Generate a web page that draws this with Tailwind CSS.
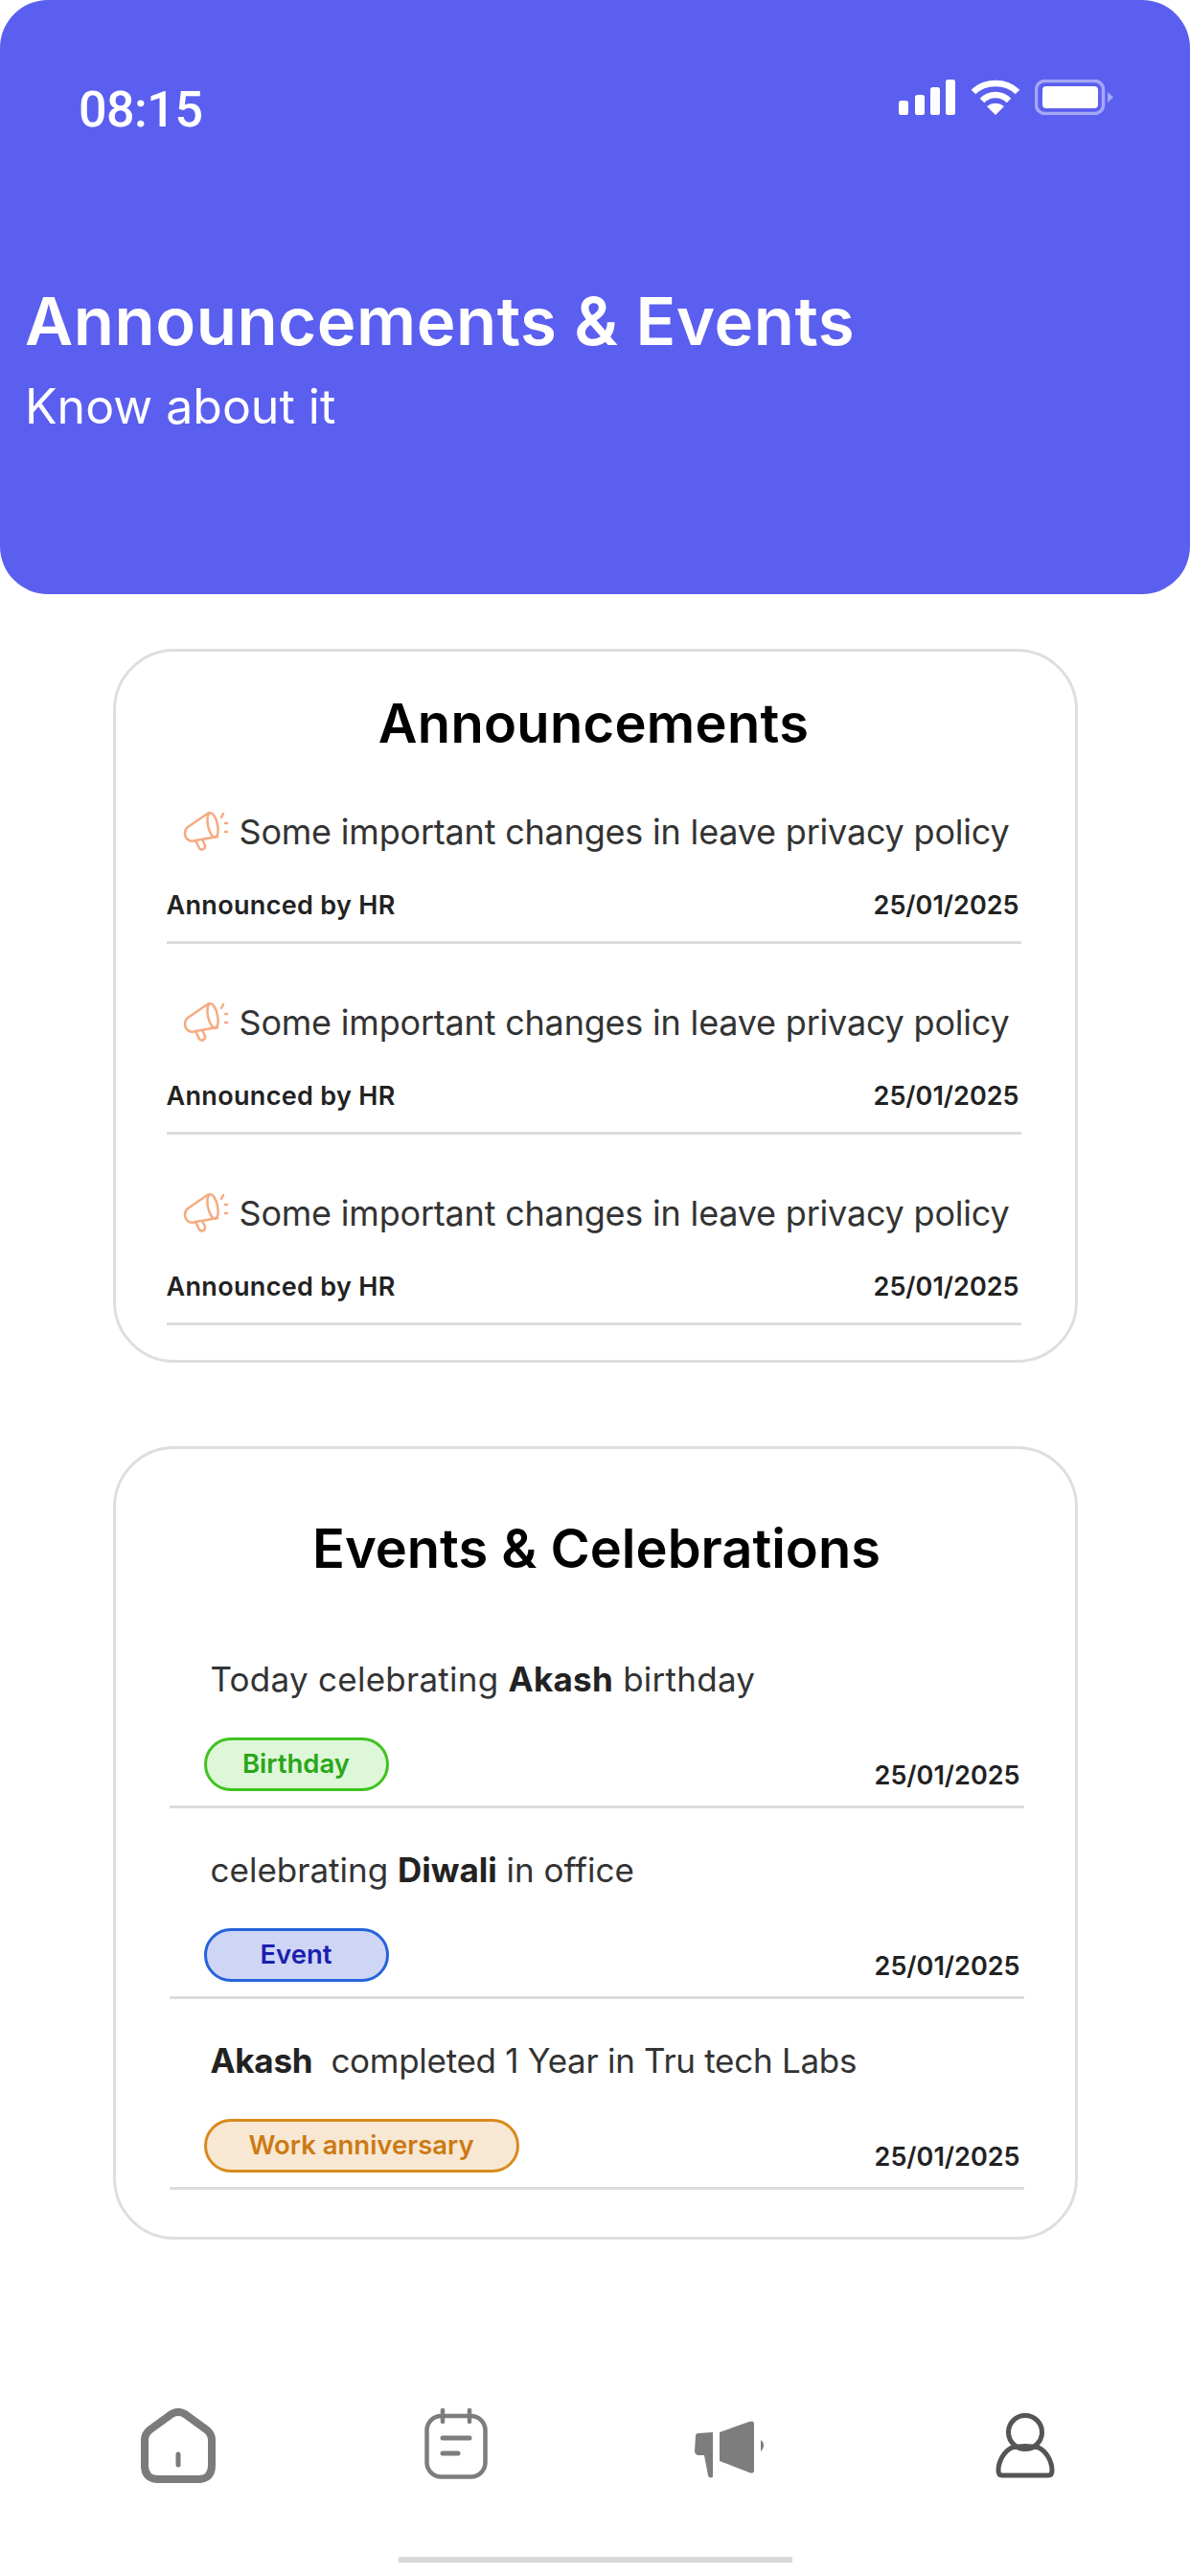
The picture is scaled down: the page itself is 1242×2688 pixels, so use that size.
<!DOCTYPE html>
<html lang="en">
  <head>
    <meta charset="UTF-8" />
    <meta name="viewport" content="width=device-width, initial-scale=1.0" />
    <script src="https://cdn.jsdelivr.net/npm/@tailwindcss/browser@4"></script>
    <title>Announcements & Events</title>
  </head>
  <body class="bg-white">
    <div class="w-[1242px] h-[2688px] overflow-hidden bg-white flex flex-col font-['Inter',sans-serif] text-[#2b2b2b]">
      <!-- Header -->
      <header class="h-[620px] shrink-0 bg-[#5b5fef] rounded-[50px] text-white">
        <div class="flex justify-between items-start pl-[82px] pr-[80px] pt-[83px]">
          <span class="text-[52px] leading-[64px] tracking-[-0.5px] font-medium font-['Roboto',sans-serif]">08:15</span>
          <div class="flex items-center gap-[15px] h-[37px]">
            <svg width="60" height="37" viewBox="0 0 60 37" fill="#fff">
              <rect x="0" y="22" width="10" height="15" rx="2.5" />
              <rect x="17" y="16" width="10" height="21" rx="2.5" />
              <rect x="33" y="8" width="10" height="29" rx="2.5" />
              <rect x="49" y="0" width="10" height="37" rx="2.5" />
            </svg>
            <svg width="52" height="37" viewBox="0 0 52 37" fill="none" stroke="#fff" stroke-width="6.5">
              <path d="M3 13 C15 1 37 1 49 13" />
              <path d="M12 22 C20 14 32 14 40 22" />
              <path d="M26 37 L17 28 C22 23.500 30 23.500 35 28 Z" fill="#fff" stroke="none" />
            </svg>
            <svg width="82" height="37" viewBox="0 0 82 37" fill="none">
              <rect x="1.500" y="1.500" width="70" height="34" rx="9" stroke="#fff" stroke-opacity="0.45" stroke-width="3.500" />
              <rect x="8" y="7" width="58" height="23" rx="4" fill="#fff" />
              <path d="M76 13 L82 18.500 L76 24 Z" fill="#fff" fill-opacity="0.45" />
            </svg>
          </div>
        </div>
        <div class="pl-[26px] mt-[148px]">
          <h1 class="text-[69px] leading-[80px] font-semibold whitespace-nowrap tracking-[0.5px]">Announcements &amp; Events</h1>
          <p class="text-[50px] leading-[60px] mt-[19px] whitespace-nowrap">Know about it</p>
        </div>
      </header>

      <main class="flex flex-col items-center">
        <!-- Announcements -->
        <section class="w-[1007px] h-[745px] mt-[57px] border-[3px] border-[#dedede] rounded-[64px] bg-white pl-[53px] pr-[56px]">
          <h2 class="text-[56px] leading-[62px] font-semibold text-black text-center mt-[44px] tracking-[0.3px]">Announcements</h2>

          <div class="h-[199px] pt-[54px] border-b-[3px] border-[#dcdcdc]">
            <div class="flex items-center pl-[17px] h-[56px]">
              <svg width="50" height="44" viewBox="0 0 50 44" fill="none" stroke="#f5ab82" stroke-width="2.500" stroke-linejoin="round" stroke-linecap="round" class="shrink-0">
                <path d="M27 2 L5 17 C1 20 1 27 5 30 C7 32 10 32 13 31 L36 27" />
                <ellipse cx="31" cy="15" rx="5" ry="13" transform="rotate(-12 31 15)" />
                <path d="M13 31 L17 39 C19 42 24 40 23 36 L20 30" />
                <path d="M42 3 L40 7 M46 13 L44 13 M46 22 L44 22" />
              </svg>
              <span class="ml-[9px] text-[36px] leading-[46px] text-[#333] whitespace-nowrap tracking-[-0.2px]">Some important changes in leave privacy policy</span>
            </div>
            <div class="flex justify-between items-center mt-[32px] leading-[34px] font-semibold text-[#222] pr-[2px]">
              <span class="text-[27px] tracking-[0.33px]">Announced by HR</span><span class="text-[27px]">25/01/2025</span>
            </div>
          </div>

          <div class="h-[199px] pt-[54px] border-b-[3px] border-[#dcdcdc]">
            <div class="flex items-center pl-[17px] h-[56px]">
              <svg width="50" height="44" viewBox="0 0 50 44" fill="none" stroke="#f5ab82" stroke-width="2.500" stroke-linejoin="round" stroke-linecap="round" class="shrink-0">
                <path d="M27 2 L5 17 C1 20 1 27 5 30 C7 32 10 32 13 31 L36 27" />
                <ellipse cx="31" cy="15" rx="5" ry="13" transform="rotate(-12 31 15)" />
                <path d="M13 31 L17 39 C19 42 24 40 23 36 L20 30" />
                <path d="M42 3 L40 7 M46 13 L44 13 M46 22 L44 22" />
              </svg>
              <span class="ml-[9px] text-[36px] leading-[46px] text-[#333] whitespace-nowrap tracking-[-0.2px]">Some important changes in leave privacy policy</span>
            </div>
            <div class="flex justify-between items-center mt-[32px] leading-[34px] font-semibold text-[#222] pr-[2px]">
              <span class="text-[27px] tracking-[0.33px]">Announced by HR</span><span class="text-[27px]">25/01/2025</span>
            </div>
          </div>

          <div class="h-[199px] pt-[54px] border-b-[3px] border-[#dcdcdc]">
            <div class="flex items-center pl-[17px] h-[56px]">
              <svg width="50" height="44" viewBox="0 0 50 44" fill="none" stroke="#f5ab82" stroke-width="2.500" stroke-linejoin="round" stroke-linecap="round" class="shrink-0">
                <path d="M27 2 L5 17 C1 20 1 27 5 30 C7 32 10 32 13 31 L36 27" />
                <ellipse cx="31" cy="15" rx="5" ry="13" transform="rotate(-12 31 15)" />
                <path d="M13 31 L17 39 C19 42 24 40 23 36 L20 30" />
                <path d="M42 3 L40 7 M46 13 L44 13 M46 22 L44 22" />
              </svg>
              <span class="ml-[9px] text-[36px] leading-[46px] text-[#333] whitespace-nowrap tracking-[-0.2px]">Some important changes in leave privacy policy</span>
            </div>
            <div class="flex justify-between items-center mt-[32px] leading-[34px] font-semibold text-[#222] pr-[2px]">
              <span class="text-[27px] tracking-[0.33px]">Announced by HR</span><span class="text-[27px]">25/01/2025</span>
            </div>
          </div>
        </section>

        <!-- Events -->
        <section class="w-[1007px] h-[828px] mt-[87px] border-[3px] border-[#dedede] rounded-[64px] bg-white pl-[56px] pr-[53px]">
          <h2 class="text-[56px] leading-[70px] font-semibold text-black text-center mt-[69px] mb-[37px]">Events &amp; Celebrations</h2>

          <div class="h-[199px] pt-[41px] border-b-[3px] border-[#dcdcdc]">
            <p class="pl-[43px] text-[35px] leading-[46px] text-[#333] whitespace-nowrap tracking-[0.26px]">Today celebrating <b class="font-bold text-[#222]">Akash</b> birthday</p>
            <div class="flex justify-between items-end mt-[38px] pl-[36px] pr-[4px]">
              <span class="h-[56px] w-[193px] flex items-center justify-center rounded-full border-[3px] border-[#3fc31f] bg-[#def7d8] text-[#2aa61a] text-[27.500px] font-semibold">Birthday</span>
              <span class="text-[27px] leading-[34px] font-semibold text-[#222] mb-[-1px]">25/01/2025</span>
            </div>
          </div>

          <div class="h-[199px] pt-[41px] border-b-[3px] border-[#dcdcdc]">
            <p class="pl-[43px] text-[35px] leading-[46px] text-[#333] whitespace-nowrap">celebrating <b class="font-bold text-[#222]">Diwali</b> in office</p>
            <div class="flex justify-between items-end mt-[38px] pl-[36px] pr-[4px]">
              <span class="h-[56px] w-[193px] flex items-center justify-center rounded-full border-[3px] border-[#2563d9] bg-[#cfd5f5] text-[#1a1fb0] text-[27.500px] font-semibold">Event</span>
              <span class="text-[27px] leading-[34px] font-semibold text-[#222] mb-[-1px]">25/01/2025</span>
            </div>
          </div>

          <div class="h-[199px] pt-[41px] border-b-[3px] border-[#dcdcdc]">
            <p class="pl-[43px] text-[35px] leading-[46px] text-[#333] whitespace-nowrap tracking-[-0.28px]"><b class="font-bold text-[#222]">Akash</b>&nbsp; completed 1 Year in Tru tech Labs</p>
            <div class="flex justify-between items-end mt-[38px] pl-[36px] pr-[4px]">
              <span class="h-[56px] w-[329px] flex items-center justify-center rounded-full border-[3px] border-[#d98a1e] bg-[#f8e8d3] text-[#cc7a14] text-[27.500px] font-semibold">Work anniversary</span>
              <span class="text-[27px] leading-[34px] font-semibold text-[#222] mb-[-1px]">25/01/2025</span>
            </div>
          </div>
        </section>
      </main>

      <!-- Bottom nav -->
      <nav class="flex items-start pl-[147px] mt-[176px]">
        <svg width="78" height="78" viewBox="0 0 78 78" fill="none" stroke="#7b7b7b" stroke-width="8" stroke-linejoin="round">
          <path d="M32 6 L10 22 C6 25 4 28 4 33 L4 60 C4 69 9 74 18 74 L60 74 C69 74 74 69 74 60 L74 33 C74 28 72 25 68 22 L46 6 C41 3 37 3 32 6 Z" />
          <path d="M39 48 L39 59" stroke-width="5" stroke-linecap="round" />
        </svg>
        <svg width="66" height="74" viewBox="0 0 66 74" fill="none" stroke="#7d7d7d" stroke-width="4.500" stroke-linecap="round" class="ml-[218px]">
          <rect x="2.500" y="8" width="61" height="63.500" rx="15" />
          <path d="M19 2 L19 14 M47 2 L47 14" />
          <path d="M19 31 L47 31" stroke-width="5" />
          <path d="M19 47 L35 47" stroke-width="5" />
        </svg>
        <svg width="76" height="62" viewBox="0 0 76 62" fill="#7d7d7d" class="ml-[215px] mt-[11px]">
          <path d="M2 18 C2 16 3 15 5 15 L20 14 L20 60 C20 62 15 62 15 59 L11 38 L5 38 C3 38 1 36 1 34 Z" />
          <path d="M27 14 L58 3 C60 2 63 2 63 5 L63 54 C63 57 60 57 58 56 L27 44 Z" />
          <path d="M70 22 C74 25 74 30 70 34 Z" />
        </svg>
        <svg width="62" height="68" viewBox="0 0 62 68" fill="none" stroke="#555" stroke-width="5" stroke-linejoin="round" class="ml-[239px] mt-[5px]">
          <circle cx="31" cy="20" r="17.500" />
          <path d="M17 36 C9 40 3 50 3 60 C3 63 4 65 7 65 L55 65 C58 65 59 63 59 60 C59 50 53 40 45 36 C36 34 26 34 17 36 Z" />
        </svg>
      </nav>

      <div class="w-[411px] h-[6px] bg-[#d8d8d8] mx-auto mt-[77px]"></div>
    </div>
  </body>
</html>
